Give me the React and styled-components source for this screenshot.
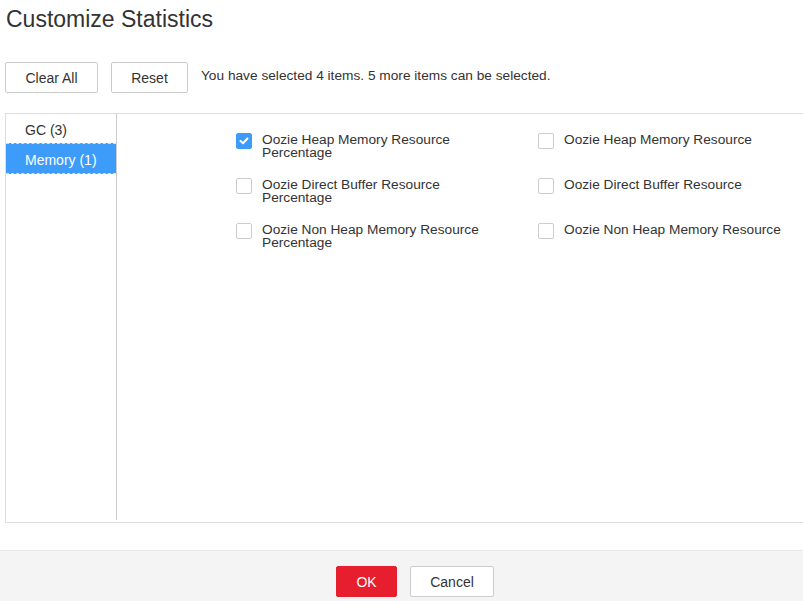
import React from "react";
import styled, { createGlobalStyle } from "styled-components";

const Global = createGlobalStyle`
  body {
    margin: 0;
    font-family: "Liberation Sans", Arial, sans-serif;
    color: #333;
    background: #fff;
  }
`;

const Page = styled.div`
  width: 803px;
  height: 601px;
  display: flex;
  flex-direction: column;
  overflow: hidden;
`;

const Title = styled.h1`
  margin: 0;
  padding: 5px 0 0 6px;
  font-size: 23px;
  line-height: 28px;
  font-weight: normal;
  color: #333;
`;

const Toolbar = styled.div`
  display: flex;
  align-items: center;
  gap: 13px;
  margin: 29px 0 0 5px;
`;

const Button = styled.button`
  flex: none;
  height: 31px;
  width: ${p => p.w}px;
  border: 1px solid ${p => (p.primary ? "#e61e2e" : "#ccc")};
  border-radius: 2px;
  background: ${p => (p.primary ? "#e61e2e" : "#fff")};
  color: ${p => (p.primary ? "#fff" : "#333")};
  font-family: inherit;
  font-size: 14px;
  padding: 0;
  cursor: pointer;
`;

const Hint = styled.span`
  font-size: 13.7px;
  line-height: 16px;
  margin-top: -3px;
  color: #333;
`;

const Panel = styled.div`
  display: flex;
  width: 820px;
  height: 408px;
  margin: 20px 0 0 5px;
  border: 1px solid #ddd;
`;

const Sidebar = styled.ul`
  flex: none;
  list-style: none;
  margin: 0 0 2px 0;
  padding: 0;
  width: 110px;
  border-right: 1px solid #ccc;
`;

const SideItem = styled.li`
  height: 26px;
  line-height: 26px;
  padding: 3px 0 0 19px;
  font-size: 14px;
  color: ${p => (p.active ? "#fff" : "#333")};
  background: ${p => (p.active ? "#3d9bfa" : "transparent")};
  border-top: ${p => (p.active ? "1px dashed #cfe4fb" : "none")};
  border-bottom: ${p => (p.active ? "1px dashed #cfe4fb" : "none")};
`;

const Options = styled.div`
  display: grid;
  grid-template-columns: 302px 302px;
  grid-auto-rows: 45px;
  padding: 19px 0 0 119px;
`;

const Option = styled.label`
  display: flex;
  align-items: flex-start;
  gap: 10px;
`;

const Box = styled.span`
  flex: none;
  width: 14px;
  height: 14px;
  border: 1px solid ${p => (p.checked ? "#3d9bfa" : "#ccc")};
  border-radius: 2px;
  background: ${p => (p.checked ? "#3d9bfa" : "#fff")};
  display: flex;
  align-items: center;
  justify-content: center;
`;

const OptionText = styled.span`
  width: 232px;
  font-size: 13.7px;
  line-height: 13px;
  color: #333;
`;

const Footer = styled.div`
  margin-top: auto;
  height: 51px;
  border-top: 1px solid #e8e8e8;
  background: #f4f4f4;
  display: flex;
  justify-content: center;
  align-items: flex-start;
  gap: 13px;
  padding: 15px 0 0 27px;
  box-sizing: border-box;
`;

const options = [
  { label: "Oozie Heap Memory Resource Percentage", checked: true },
  { label: "Oozie Heap Memory Resource", checked: false },
  { label: "Oozie Direct Buffer Resource Percentage", checked: false },
  { label: "Oozie Direct Buffer Resource", checked: false },
  { label: "Oozie Non Heap Memory Resource Percentage", checked: false },
  { label: "Oozie Non Heap Memory Resource", checked: false },
];

export default function App() {
  return (
    <Page>
      <Global />
      <Title>Customize Statistics</Title>
      <Toolbar>
        <Button w={93}>Clear All</Button>
        <Button w={77}>Reset</Button>
        <Hint>You have selected 4 items. 5 more items can be selected.</Hint>
      </Toolbar>
      <Panel>
        <Sidebar>
          <SideItem>GC (3)</SideItem>
          <SideItem active>Memory (1)</SideItem>
        </Sidebar>
        <Options>
          {options.map(o => (
            <Option key={o.label}>
              <Box checked={o.checked}>
                {o.checked && (
                  <svg width="10" height="8" viewBox="0 0 10 8">
                    <path d="M1.5 4 L4 6.3 L8.5 1.5" stroke="#fff" strokeWidth="2" fill="none" strokeLinecap="round" strokeLinejoin="round" />
                  </svg>
                )}
              </Box>
              <OptionText>{o.label}</OptionText>
            </Option>
          ))}
        </Options>
      </Panel>
      <Footer>
        <Button primary w={61}>OK</Button>
        <Button w={84}>Cancel</Button>
      </Footer>
    </Page>
  );
}
